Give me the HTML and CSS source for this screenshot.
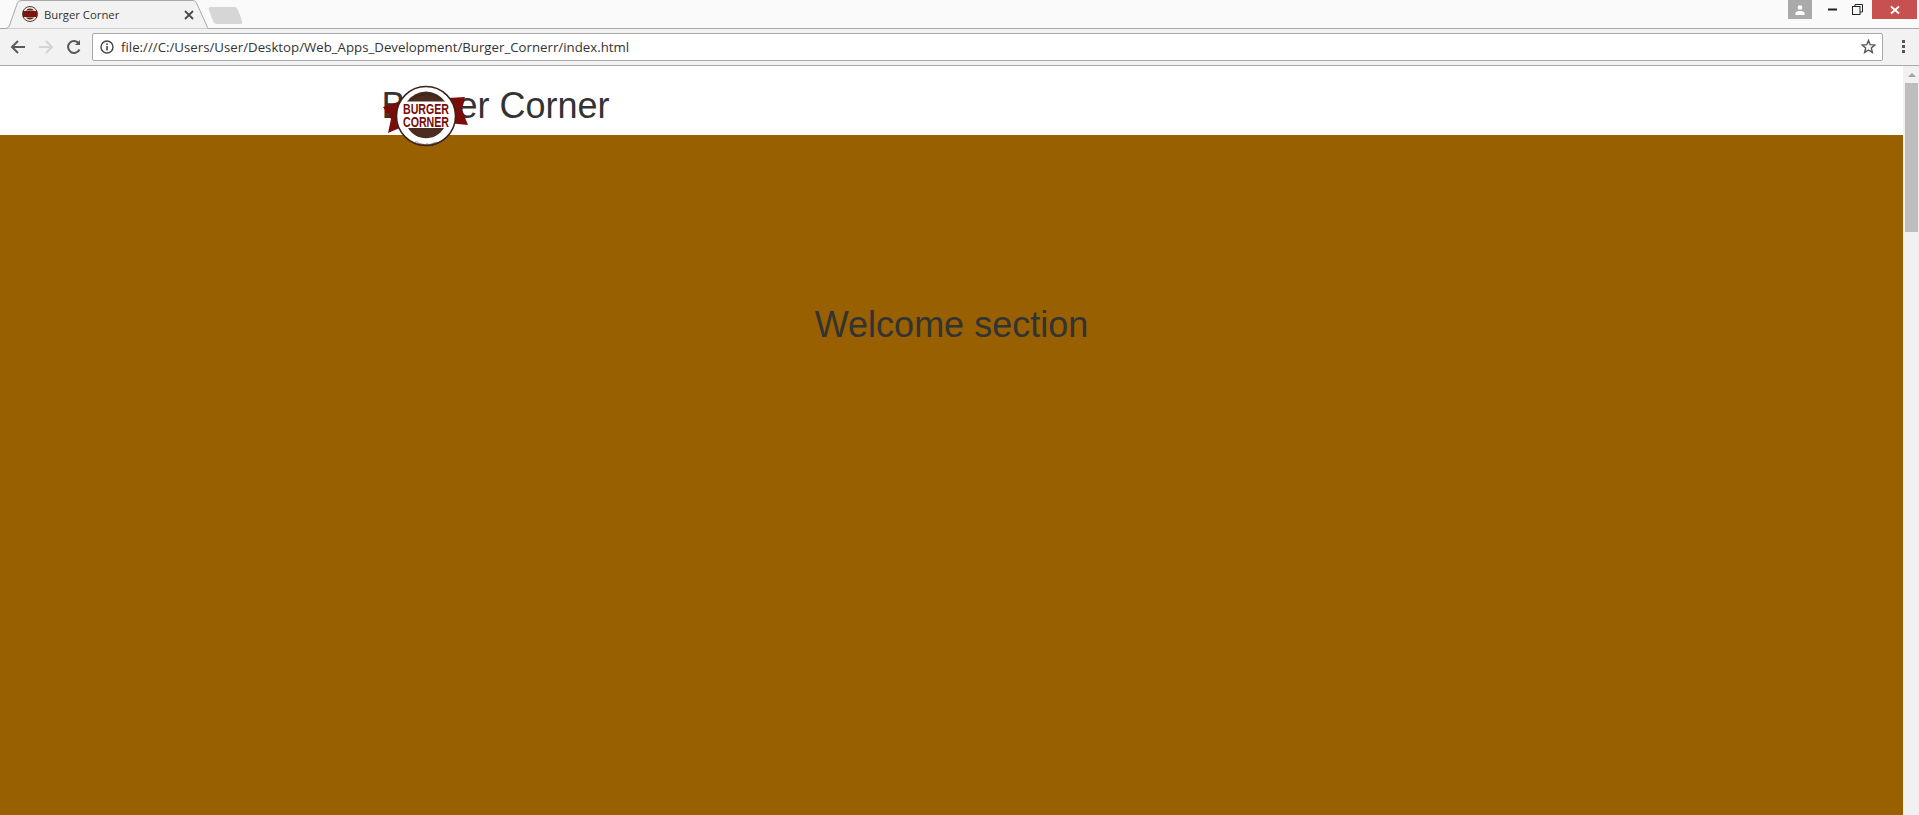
FILE: index.html
```html
<!DOCTYPE html>
<html lang="en">
<head>
    <meta charset="UTF-8">
    <title>Burger Corner</title>
    <link rel="stylesheet" href="styles.css">
</head>
<body>
<div class="browser">
    <div class="tab-strip">
        <div class="tab">
            <svg class="tab-shape" width="208" height="29" viewBox="0 0 208 29">
                <path d="M0 28.5H5C8 28.5 9 27 10 24L17 4C18 1.500 19 .5 22 .5H192C195 .5 196 1.500 197 4L206 24C207 27 208 28.500 208 28.500" fill="#f2f2f2" stroke="#a9a9a9"/>
            </svg>
            <svg class="tab-icon" width="16" height="16" viewBox="0 0 16 16">
                <circle cx="8" cy="8" r="7.500" fill="#f1e6e0" stroke="#5a3a30"/>
                <rect x="1" y="5" width="14" height="6" fill="#7c1512"/>
                <path d="M4 4.500a5 5 0 0 1 8 0zM4 11.500a5 5 0 0 0 8 0z" fill="#4b2c20"/>
            </svg>
            <span class="tab-title">Burger Corner</span>
            <span class="tab-close">
                <svg width="10" height="10" viewBox="0 0 10 10"><path d="M1 1L9 9M9 1L1 9" stroke="#4a4a4a" stroke-width="1.800"/></svg>
            </span>
        </div>
        <div class="new-tab"></div>
        <div class="window-controls">
            <div class="profile">
                <svg width="12" height="10" viewBox="0 0 12 10"><circle cx="6" cy="2.500" r="2.300" fill="#fff"/><path d="M1.500 10V8C1.500 6.500 4 6 6 6S10.500 6.500 10.500 8V10Z" fill="#fff"/></svg>
            </div>
            <div class="win-btn">
                <svg width="9" height="3" viewBox="0 0 9 3"><rect width="9" height="2" y=".5" fill="#222"/></svg>
            </div>
            <div class="win-btn win-restore">
                <svg width="11" height="11" viewBox="0 0 11 11" fill="none" stroke="#222"><rect x=".5" y="2.500" width="7.500" height="8"/><path d="M3 2.500V.5H10.500V8H8"/></svg>
            </div>
            <div class="win-close">
                <svg width="10" height="10" viewBox="0 0 10 10"><path d="M1 1.500L9 8.500M9 1.500L1 8.500" stroke="#fff" stroke-width="1.800"/></svg>
            </div>
        </div>
    </div>
    <div class="toolbar">
        <svg class="nav-icon" width="16" height="16" viewBox="0 0 16 16" fill="none" stroke="#5a5a5a" stroke-width="2"><path d="M15 8H2M8 2L2 8L8 14"/></svg>
        <svg class="nav-icon" width="16" height="16" viewBox="0 0 16 16" fill="none" stroke="#d4d4d4" stroke-width="2"><path d="M1 8H14M8 2L14 8L8 14"/></svg>
        <svg class="nav-icon" width="16" height="16" viewBox="0 0 16 16" fill="none" stroke="#5a5a5a" stroke-width="2"><path d="M13.500 10.500A6 6 0 1 1 13 4.500"/><path d="M14 1V6H9" fill="#5a5a5a" stroke="none"/></svg>
        <div class="omnibox">
            <svg class="info-icon" width="14" height="14" viewBox="0 0 14 14"><circle cx="7" cy="7" r="6" fill="none" stroke="#444" stroke-width="1.400"/><rect x="6.200" y="6" width="1.600" height="4.500" fill="#444"/><rect x="6.200" y="3.300" width="1.600" height="1.600" fill="#444"/></svg>
            <span class="url">file:///C:/Users/User/Desktop/Web_Apps_Development/Burger_Cornerr/index.html</span>
            <svg class="star-icon" width="15" height="15" viewBox="0 0 15 15"><path d="M7.500 1.500L9.200 5.700L13.800 6L10.300 8.900L11.400 13.400L7.500 11L3.600 13.400L4.700 8.900L1.200 6L5.800 5.700Z" fill="none" stroke="#555" stroke-width="1.400"/></svg>
        </div>
        <div class="menu-dots"><i></i><i></i><i></i></div>
    </div>
    <div class="viewport">
        <div class="page">
            <header class="site-header">
                <div class="container">
                    <h1>Burger Corner</h1>
                    <svg class="logo" width="88" height="64" viewBox="0 0 88 64">
                        <defs>
                            <path id="logo-arc-top" d="M19 32A25.500 25.500 0 0 1 69 32"/>
                            <path id="logo-arc-bottom" d="M14 32A30 30 0 0 0 74 32"/>
                        </defs>
                        <path d="M1 23L16 18L20 43L6 49L9 35Z" fill="#7a0d0a"/>
                        <path d="M83 13L66 14L66 39L86 41L80 26Z" fill="#7a0d0a"/>
                        <circle cx="44" cy="32" r="29.500" fill="#fff" stroke="#3c2018" stroke-width="1.500"/>
                        <path d="M25 17.500A23 23 0 0 1 63 17.500Z" fill="#4b2c20"/>
                        <path d="M26 44H62A21 21 0 0 1 26 44Z" fill="#4b2c20"/>
                        <text class="logo-word" x="44" y="30" text-anchor="middle" textLength="46" lengthAdjust="spacingAndGlyphs">BURGER</text>
                        <text class="logo-word" x="44" y="43" text-anchor="middle" textLength="46" lengthAdjust="spacingAndGlyphs">CORNER</text>
                        <text class="logo-small"><textPath href="#logo-arc-top" startOffset="50%" text-anchor="middle">Gourmet Burgers</textPath></text>
                        <text class="logo-small"><textPath href="#logo-arc-bottom" startOffset="50%" text-anchor="middle">Copenhagen</textPath></text>
                    </svg>
                </div>
            </header>
            <section class="welcome">
                <h2>Welcome section</h2>
            </section>
        </div>
        <div class="scrollbar">
            <div class="scroll-up"></div>
            <div class="scroll-thumb"></div>
        </div>
    </div>
</div>
</body>
</html>
```

FILE: styles.css
```css
* {
    box-sizing: border-box;
}

html, body {
    height: 100%;
    margin: 0;
    overflow: hidden;
}

body {
    font-family: "Liberation Sans", Arial, sans-serif;
    color: #333;
    background-color: #fff;
}

.browser {
    display: flex;
    flex-direction: column;
    height: 100%;
}

/* tab strip */
.tab-strip {
    display: flex;
    align-items: flex-start;
    height: 29px;
    background-color: #fafafa;
    border-bottom: 1px solid #a9a9a9;
}

.tab {
    position: relative;
    display: flex;
    align-items: center;
    width: 208px;
    height: 29px;
    padding: 0 0 1px 22px;
    flex: none;
}

.tab-shape {
    position: absolute;
    top: 0;
    left: 0;
}

.tab-icon {
    position: relative;
    margin-right: 6px;
}

.tab-title {
    position: relative;
    font-family: "Open Sans", "Liberation Sans", sans-serif;
    font-size: 11.300px;
    color: #333;
}

.tab-close {
    position: absolute;
    top: 10px;
    left: 184px;
    line-height: 0;
}

.new-tab {
    width: 29px;
    height: 17px;
    margin: 7px 0 0 3px;
    background-color: #d6d6d6;
    border-radius: 3px;
    transform: skewX(20deg);
}

.window-controls {
    display: flex;
    margin-left: auto;
    padding-right: 2px;
}

.profile {
    display: flex;
    align-items: center;
    justify-content: center;
    width: 24px;
    height: 19px;
    margin-right: 8px;
    background-color: #aaa;
}

.win-btn {
    display: flex;
    align-items: center;
    justify-content: center;
    width: 25px;
    height: 19px;
}

.win-restore {
    margin-right: 2px;
}

.win-close {
    display: flex;
    align-items: center;
    justify-content: center;
    width: 45px;
    height: 19px;
    background-color: #c75050;
}

/* address bar */
.toolbar {
    display: flex;
    align-items: center;
    height: 37px;
    padding: 0 0 1px 10px;
    background-color: #f2f2f2;
    border-bottom: 1px solid #a9a9a9;
}

.nav-icon {
    flex: none;
    margin-right: 12px;
}

.omnibox {
    display: flex;
    align-items: center;
    flex: 1;
    height: 28px;
    margin-left: -2px;
    padding: 0 6px 0 7px;
    background-color: #fff;
    border: 1px solid #a9a9a9;
    border-radius: 2px;
}

.info-icon {
    margin-right: 7px;
}

.url {
    font-family: "Open Sans", "Liberation Sans", sans-serif;
    font-size: 13.250px;
    color: #333;
}

.star-icon {
    margin-left: auto;
}

.menu-dots {
    display: flex;
    flex-direction: column;
    gap: 2px;
    width: 36px;
    padding-left: 4px;
    align-items: center;
}

.menu-dots i {
    width: 3px;
    height: 3px;
    background-color: #555;
}

/* page */
.viewport {
    display: flex;
    flex: 1;
    min-height: 0;
}

.page {
    flex: 1;
    display: flex;
    flex-direction: column;
}

.site-header {
    height: 69px;
    background-color: #fff;
}

.container {
    position: relative;
    width: 1170px;
    margin: 0 auto;
    padding: 0 15px;
}

h1 {
    margin: 0;
    padding-top: 20px;
    font-size: 36px;
    font-weight: 500;
    line-height: 1.1;
    color: #333;
}

.logo {
    position: absolute;
    top: 18px;
    left: 15px;
}

.logo-word {
    font-family: "Liberation Sans", sans-serif;
    font-size: 15px;
    font-weight: 700;
    fill: #7a0d0a;
}

.logo-small {
    font-family: "Liberation Sans", sans-serif;
    font-size: 4px;
    font-style: italic;
    font-weight: 700;
    fill: #3c2018;
}

.welcome {
    flex: 1;
    background-color: #986000;
    text-align: center;
}

h2 {
    margin: 0;
    padding-top: 170px;
    font-size: 36px;
    font-weight: 500;
    line-height: 1.1;
    color: #333;
}

/* scrollbar */
.scrollbar {
    flex: none;
    width: 16px;
    padding: 0 1px 0 2px;
    background-color: #f1f1f1;
}

.scroll-up {
    width: 0;
    height: 0;
    margin: 7px auto 6px;
    border-left: 4px solid transparent;
    border-right: 4px solid transparent;
    border-bottom: 4px solid #a3a3a3;
}

.scroll-thumb {
    height: 149px;
    background-color: #bdbdbd;
}
```
